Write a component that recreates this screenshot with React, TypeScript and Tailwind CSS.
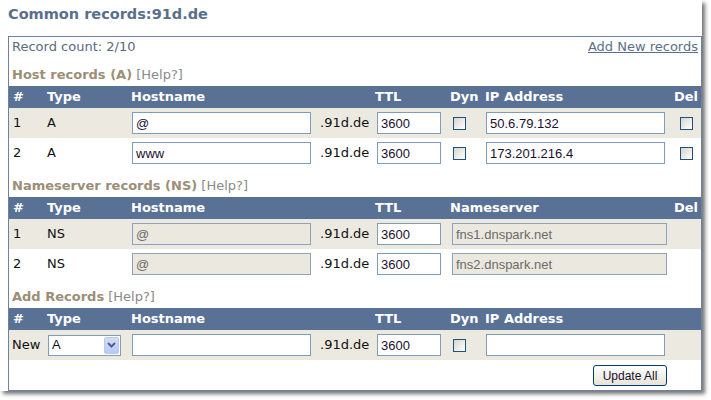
import React from "react";

const GRID = "grid grid-cols-[34px_84px_189px_55px_75px_35px_189px_31px] items-center";

function Checkbox({ ml }: { ml: string }) {
  return (
    <div className={`${ml} w-[13px] h-[13px] border border-[#1c5180] bg-linear-to-br from-[#d6d5ce] to-white`} />
  );
}

function TextBox({ value, w, ml, disabled }: { value: string; w: string; ml: string; disabled?: boolean }) {
  return (
    <div
      className={`${ml} ${w} h-[22px] border flex items-center px-[3px] text-[13px] leading-none ${
        disabled ? "bg-[#ebe8e0] border-[#8fa2bb] text-[#6b6b6b]" : "bg-white border-[#7f9db9] text-[#1a1030]"
      }`}
      style={{ fontFamily: '"Liberation Sans", Arial, sans-serif' }}
    >
      {value}
    </div>
  );
}

function SectionTitle({ title }: { title: string }) {
  return (
    <div className="h-[29px] pt-[10px] pl-[3px] text-[13px] leading-[16px]">
      <span className="font-bold text-[#9c8e77]">{title}</span>{" "}
      <span className="text-[#8a8a8a]">[Help?]</span>
    </div>
  );
}

function Header({ cols }: { cols: (string | null)[] }) {
  return (
    <div className={`${GRID} h-[22px] bg-[#5a7196] text-white font-bold text-[13px]`}>
      {cols.map((c, i) =>
        c === "Nameserver" ? (
          <div key={i} className="col-span-2 pl-[4px]">{c}</div>
        ) : c === "Del" ? (
          <div key={i} className="text-right pr-[3px]">{c}</div>
        ) : (
          <div key={i} className="pl-[4px]">{c ?? ""}</div>
        )
      )}
    </div>
  );
}

function HostRow({ n, host, ip, shaded }: { n: string; host: string; ip: string; shaded: boolean }) {
  return (
    <div className={`${GRID} h-[30px] ${shaded ? "bg-[#ece9e1]" : "bg-white"} text-[13px] text-[#111]`}>
      <div className="pl-[4px]">{n}</div>
      <div className="pl-[4px]">A</div>
      <div><TextBox value={host} w="w-[179px]" ml="ml-[5px]" /></div>
      <div className="pl-[4px]">.91d.de</div>
      <div><TextBox value="3600" w="w-[64px]" ml="ml-[6px]" /></div>
      <div><Checkbox ml="ml-[7px]" /></div>
      <div><TextBox value={ip} w="w-[179px]" ml="ml-[5px]" /></div>
      <div><Checkbox ml="ml-[10px]" /></div>
    </div>
  );
}

function NsRow({ n, ns, shaded }: { n: string; ns: string; shaded: boolean }) {
  return (
    <div className={`${GRID} h-[30px] ${shaded ? "bg-[#ece9e1]" : "bg-white"} text-[13px] text-[#111]`}>
      <div className="pl-[4px]">{n}</div>
      <div className="pl-[4px]">NS</div>
      <div><TextBox value="@" w="w-[179px]" ml="ml-[5px]" disabled /></div>
      <div className="pl-[4px]">.91d.de</div>
      <div><TextBox value="3600" w="w-[64px]" ml="ml-[6px]" /></div>
      <div className="col-span-2"><TextBox value={ns} w="w-[215px]" ml="ml-[6px]" disabled /></div>
      <div />
    </div>
  );
}

export default function App() {
  return (
    <div className="w-[711px] h-[400px] bg-white" style={{ fontFamily: '"DejaVu Sans", Verdana, sans-serif' }}>
      <div className="w-[702px] h-[391px] bg-white shadow-[3px_3px_4px_rgba(0,0,0,0.55)] overflow-hidden">
        <div className="pl-[8px] pt-[4px] h-[36px] text-[14.5px] leading-[20px] font-bold text-[#5a6f8c]">
          Common records:91d.de
        </div>
        <div className="ml-[8px] w-[694px] border border-[#6d82a3]">
          <div className="h-[20px] pt-[2px] px-[3px] flex justify-between text-[13px] leading-[16px] text-[#5a6a80]">
            <span>Record count: 2/10</span>
            <span className="underline text-[#5a6f8c]">Add New records</span>
          </div>

          <SectionTitle title="Host records (A)" />
          <Header cols={["#", "Type", "Hostname", null, "TTL", "Dyn", "IP Address", "Del"]} />
          <HostRow n="1" host="@" ip="50.6.79.132" shaded />
          <HostRow n="2" host="www" ip="173.201.216.4" shaded={false} />

          <SectionTitle title="Nameserver records (NS)" />
          <Header cols={["#", "Type", "Hostname", null, "TTL", "Nameserver", "Del"]} />
          <NsRow n="1" ns="fns1.dnspark.net" shaded />
          <NsRow n="2" ns="fns2.dnspark.net" shaded={false} />

          <SectionTitle title="Add Records" />
          <Header cols={["#", "Type", "Hostname", null, "TTL", "Dyn", "IP Address", null]} />
          <div className={`${GRID} h-[30px] bg-[#ece9e1] text-[13px] text-[#111]`}>
            <div className="pl-[3px]">New</div>
            <div>
              <div
                className="ml-[5px] w-[73px] h-[21px] border border-[#7f9db9] bg-white flex items-center justify-between pl-[3px] pr-[1px] text-[13px] text-[#111]"
                style={{ fontFamily: '"Liberation Sans", Arial, sans-serif' }}
              >
                <span>A</span>
                <div className="w-[15px] h-[17px] rounded-[2px] border border-[#b8c8ee] bg-linear-to-b from-[#d3ddfb] to-[#b6c9f5] flex items-center justify-center">
                  <svg width="9" height="6" viewBox="0 0 9 6">
                    <path d="M1 1 L4.5 4.5 L8 1" fill="none" stroke="#4d6185" strokeWidth="2" />
                  </svg>
                </div>
              </div>
            </div>
            <div><TextBox value="" w="w-[179px]" ml="ml-[5px]" /></div>
            <div className="pl-[4px]">.91d.de</div>
            <div><TextBox value="3600" w="w-[64px]" ml="ml-[6px]" /></div>
            <div><Checkbox ml="ml-[7px]" /></div>
            <div><TextBox value="" w="w-[179px]" ml="ml-[5px]" /></div>
            <div />
          </div>
          <div className="h-[30px] pt-[5px] pr-[34px] flex justify-end items-start">
            <div
              className="w-[74px] h-[21px] rounded-[3px] border border-[#003c74] bg-linear-to-b from-white to-[#e6e3d6] flex items-center justify-center text-[12px] text-[#1a1030]"
              style={{ fontFamily: '"Liberation Sans", Arial, sans-serif' }}
            >
              Update All
            </div>
          </div>
        </div>
      </div>
    </div>
  );
}
